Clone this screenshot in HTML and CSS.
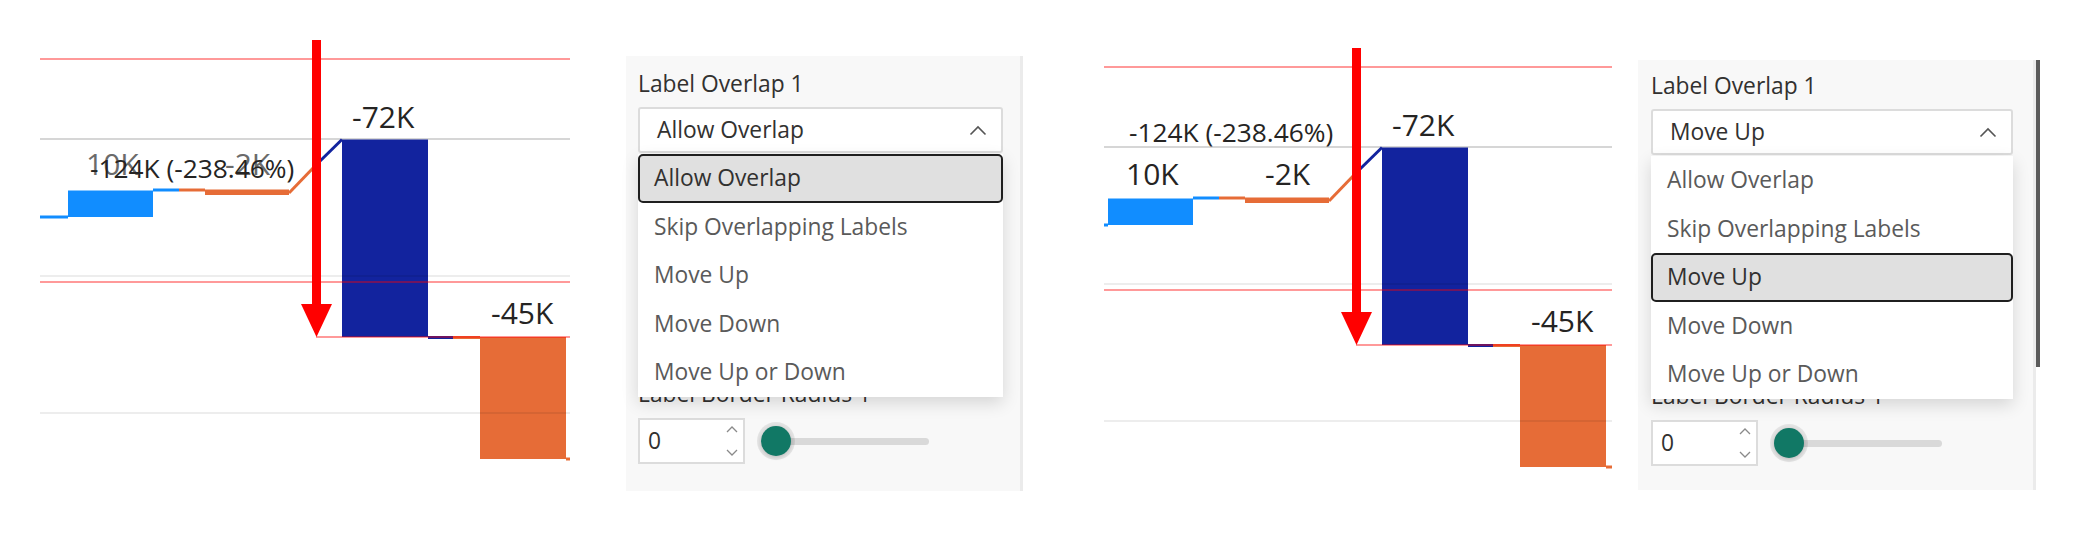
FILE: index.html
```html
<!DOCTYPE html>
<html lang="en">
	<head>
		<meta charset="UTF-8" />
		<meta name="viewport" content="width=device-width, initial-scale=1.0" />
		<title>Label Overlap</title>
		<link rel="stylesheet" href="styles.css">
	</head>
	<body>
		<main class="page">
			<!-- Allow Overlap: labels stack on each other -->
			<section class="shot shot-first">
				<svg class="chart" width="530" height="546" viewBox="40 0 530 546">
					<line x1="40" y1="139" x2="570" y2="139" class="grid-main" />
					<path d="M40 217H68" class="step step-up" />
					<rect x="68" y="190.5" width="85" height="26.5" class="bar-up" />
					<path d="M153 190H179" class="step step-up" />
					<path d="M179 190H205" class="step step-down" />
					<rect x="205" y="189.5" width="84" height="5.5" class="bar-down" />
					<path d="M289 193L316 165" class="step step-down" />
					<path d="M316 165L342 139.5" class="step step-total" />
					<rect x="342" y="139.5" width="86" height="197.5" class="bar-total" />
					<path d="M428 337.5H453" class="step step-total" />
					<path d="M453 337.5H480" class="step step-down" />
					<rect x="480" y="337" width="86" height="122" class="bar-down" />
					<path d="M566 459H570" class="step step-down" />
					<line x1="40" y1="276" x2="570" y2="276" class="grid-soft" />
					<line x1="40" y1="413" x2="570" y2="413" class="grid-soft" />
					<line x1="40" y1="59" x2="570" y2="59" class="ref-line" />
					<line x1="40" y1="282" x2="570" y2="282" class="ref-line" />
					<line x1="316" y1="337" x2="570" y2="337" class="ref-line" />
					<rect x="312" y="40" width="9" height="266" class="arrow" />
					<polygon points="301,304 332,304 316.5,337" class="arrow" />
					<text x="86" y="175" class="value value-faded">10K</text>
					<text x="225" y="175" class="value value-faded">-2K</text>
					<text x="90" y="178" class="value value-small">-124K (-238.46%)</text>
					<text x="352" y="128" class="value">-72K</text>
					<text x="491" y="324" class="value">-45K</text>
				</svg>
				<aside class="pane">
					<div class="field">
						<div class="field-label">Label Overlap 1</div>
						<div class="select">
							<span class="select-value">Allow Overlap</span>
							<svg class="chevron" width="18" height="11" viewBox="0 0 18 11"><path d="M1.5 9.5L9 2L16.5 9.5" /></svg>
							<ul class="select-menu">
								<li class="option is-selected">Allow Overlap</li>
								<li class="option">Skip Overlapping Labels</li>
								<li class="option">Move Up</li>
								<li class="option">Move Down</li>
								<li class="option">Move Up or Down</li>
							</ul>
						</div>
					</div>
					<div class="field field-radius">
						<div class="field-label">Label Border Radius 1</div>
						<div class="range-row">
							<div class="spin">
								<span class="spin-value">0</span>
								<svg class="spin-arrows" width="12" height="42" viewBox="0 0 12 42"><path d="M1 12L6 7L11 12M1 30L6 35L11 30" /></svg>
							</div>
							<div class="slider"><span class="slider-thumb"></span></div>
						</div>
					</div>
				</aside>
			</section>

			<section class="shot shot-second">
				<svg class="chart" width="508" height="546" viewBox="64 -8 508 546">
					<line x1="64" y1="139" x2="572" y2="139" class="grid-main" />
					<path d="M64 217H68" class="step step-up" />
					<rect x="68" y="190.5" width="85" height="26.5" class="bar-up" />
					<path d="M153 190H179" class="step step-up" />
					<path d="M179 190H205" class="step step-down" />
					<rect x="205" y="189.5" width="84" height="5.5" class="bar-down" />
					<path d="M289 193L316 165" class="step step-down" />
					<path d="M316 165L342 139.5" class="step step-total" />
					<rect x="342" y="139.5" width="86" height="197.5" class="bar-total" />
					<path d="M428 337.5H453" class="step step-total" />
					<path d="M453 337.5H480" class="step step-down" />
					<rect x="480" y="337" width="86" height="122" class="bar-down" />
					<path d="M566 459H572" class="step step-down" />
					<line x1="64" y1="276" x2="572" y2="276" class="grid-soft" />
					<line x1="64" y1="413" x2="572" y2="413" class="grid-soft" />
					<line x1="64" y1="59" x2="572" y2="59" class="ref-line" />
					<line x1="64" y1="282" x2="572" y2="282" class="ref-line" />
					<line x1="316" y1="337" x2="572" y2="337" class="ref-line" />
					<rect x="312" y="40" width="9" height="266" class="arrow" />
					<polygon points="301,304 332,304 316.5,337" class="arrow" />
					<text x="89" y="134" class="value value-small">-124K (-238.46%)</text>
					<text x="86" y="177" class="value">10K</text>
					<text x="225" y="177" class="value">-2K</text>
					<text x="352" y="128" class="value">-72K</text>
					<text x="491" y="324" class="value">-45K</text>
				</svg>
				<div class="pane-wrap">
					<aside class="pane">
						<div class="field">
							<div class="field-label">Label Overlap 1</div>
							<div class="select">
								<span class="select-value">Move Up</span>
								<svg class="chevron" width="18" height="11" viewBox="0 0 18 11"><path d="M1.5 9.5L9 2L16.5 9.5" /></svg>
								<ul class="select-menu">
									<li class="option">Allow Overlap</li>
									<li class="option">Skip Overlapping Labels</li>
									<li class="option is-selected">Move Up</li>
									<li class="option">Move Down</li>
									<li class="option">Move Up or Down</li>
								</ul>
							</div>
						</div>
						<div class="field field-radius">
							<div class="field-label">Label Border Radius 1</div>
							<div class="range-row">
								<div class="spin">
									<span class="spin-value">0</span>
									<svg class="spin-arrows" width="12" height="42" viewBox="0 0 12 42"><path d="M1 12L6 7L11 12M1 30L6 35L11 30" /></svg>
								</div>
								<div class="slider"><span class="slider-thumb"></span></div>
							</div>
						</div>
					</aside>
					<div class="scroll-thumb"></div>
				</div>
			</section>
		</main>
	</body>
</html>
```

FILE: styles.css
```css
* {
	box-sizing: border-box;
}

body {
	margin: 0;
	width: 2080px;
	height: 546px;
	overflow: hidden;
	background: #ffffff;
	font-family: "Open Sans", "Noto Sans", sans-serif;
	color: #323130;
}

.page {
	display: flex;
	align-items: flex-start;
}

.shot {
	display: flex;
	align-items: flex-start;
}

.shot-first {
	padding-left: 40px;
	gap: 56px;
}

.shot-second {
	margin-left: 81px;
	gap: 26px;
}

/* chart */

.chart {
	display: block;
}

.grid-main {
	stroke: #d6d6d6;
	stroke-width: 2;
}

.grid-soft {
	stroke: rgba(0, 0, 0, 0.07);
	stroke-width: 2;
}

.ref-line {
	stroke: rgba(255, 0, 0, 0.4);
	stroke-width: 2;
}

.step {
	fill: none;
	stroke-width: 3;
}

.step-up {
	stroke: #118dff;
}

.step-down {
	stroke: #e66c37;
}

.step-total {
	stroke: #12239e;
}

.bar-up {
	fill: #118dff;
}

.bar-down {
	fill: #e66c37;
}

.bar-total {
	fill: #12239e;
}

.arrow {
	fill: #ff0000;
}

.value {
	font-family: "Open Sans", "Noto Sans", sans-serif;
	font-size: 30px;
	fill: #252423;
}

.value-small {
	font-size: 26.3px;
}

.value-faded {
	fill: #6b6b6b;
}

/* format pane */

.pane {
	position: relative;
	width: 397px;
	height: 435px;
	margin-top: 56px;
	padding: 13px 17px 0 12px;
	background: #f8f8f8;
	border-right: 3px solid #ebebeb;
}

.pane-wrap {
	display: flex;
	align-items: flex-start;
	margin-top: 60px;
}

.pane-wrap .pane {
	width: 398px;
	height: 430px;
	margin-top: 0;
	padding: 11px 20px 0 13px;
}

.scroll-thumb {
	width: 4px;
	height: 307px;
	background: #5b5b5b;
}

.field-label {
	font-size: 22.8px;
	line-height: 30px;
	color: #323130;
}

.select {
	position: relative;
	display: flex;
	align-items: center;
	justify-content: space-between;
	height: 46px;
	margin-top: 8px;
	padding: 0 14px 0 17px;
	background: #ffffff;
	border: 2px solid #dcdcdc;
	border-radius: 3px;
	font-size: 22.8px;
	line-height: 30px;
}

.chevron path {
	fill: none;
	stroke: #555555;
	stroke-width: 1.6;
}

.select-menu {
	position: absolute;
	top: calc(100% + 3px);
	left: -2px;
	right: -2px;
	z-index: 2;
	margin: 0;
	padding: 0;
	list-style: none;
	background: #ffffff;
	box-shadow: 0 6px 16px rgba(0, 0, 0, 0.14);
}

.option {
	display: flex;
	align-items: center;
	height: 48.5px;
	padding: 0 14px;
	border: 2px solid transparent;
	border-radius: 5px;
	color: #5a5a5a;
}

.option.is-selected {
	background: #e0e0e0;
	border-color: #1f1f1f;
	color: #323130;
}

.field-radius {
	margin-top: 226px;
}

.range-row {
	display: flex;
	align-items: center;
	gap: 12px;
	margin-top: 9px;
}

.spin {
	display: flex;
	align-items: center;
	justify-content: space-between;
	width: 107px;
	height: 46px;
	padding: 0 5px 0 8px;
	background: #ffffff;
	border: 2px solid #dcdcdc;
	font-size: 22.8px;
	line-height: 30px;
}

.spin-arrows path {
	fill: none;
	stroke: #8a8a8a;
	stroke-width: 1.3;
}

.slider {
	position: relative;
	width: 172px;
	height: 38px;
}

.slider::before {
	content: "";
	position: absolute;
	left: 19px;
	right: 0;
	top: 16px;
	height: 7px;
	border-radius: 4px;
	background: #d9d9d9;
}

.slider-thumb {
	position: absolute;
	left: 4px;
	top: 4px;
	width: 30px;
	height: 30px;
	border-radius: 50%;
	background: #117865;
	box-shadow: 0 0 0 4px rgba(0, 0, 0, 0.08), 0 1px 4px rgba(0, 0, 0, 0.2);
}
```
